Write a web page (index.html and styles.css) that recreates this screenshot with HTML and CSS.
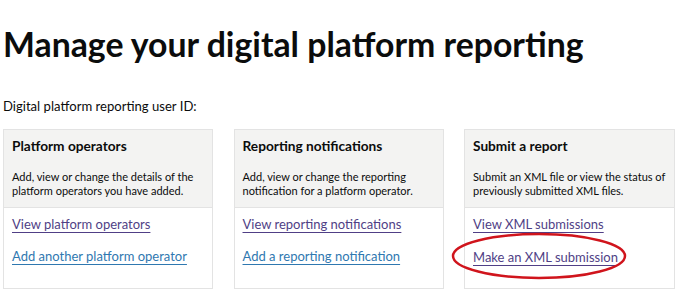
FILE: index.html
```html
<!DOCTYPE html>
<html lang="en">
<head>
    <meta charset="UTF-8">
    <title>Manage your digital platform reporting</title>
    <link rel="stylesheet" href="styles.css">
</head>
<body>

<div class="page">
    <h1 class="title">Manage your digital platform reporting</h1>
    <p class="user-id">Digital platform reporting user ID:</p>

    <div class="cards">
        <div class="card">
            <div class="card-head">
                <h2 class="card-title">Platform operators</h2>
                <p class="card-text">Add, view or change the details of the platform operators you have added.</p>
            </div>
            <div class="card-body">
                <a class="link visited" href="#">View platform operators</a>
                <a class="link" href="#">Add another platform operator</a>
            </div>
        </div>

        <div class="card">
            <div class="card-head">
                <h2 class="card-title">Reporting notifications</h2>
                <p class="card-text">Add, view or change the reporting notification for a platform operator.</p>
            </div>
            <div class="card-body">
                <a class="link visited" href="#">View reporting notifications</a>
                <a class="link" href="#">Add a reporting notification</a>
            </div>
        </div>

        <div class="card">
            <div class="card-head">
                <h2 class="card-title">Submit a report</h2>
                <p class="card-text">Submit an XML file or view the status of previously submitted XML files.</p>
            </div>
            <div class="card-body">
                <a class="link visited" href="#">View XML submissions</a>
                <span class="circled">
                    <a class="link visited" href="#">Make an XML submission</a>
                    <svg class="ring" width="176" height="48" viewBox="0 0 176 48">
                        <ellipse cx="88" cy="24" rx="86" ry="22" fill="none" stroke="#d0141c" stroke-width="2.5"/>
                    </svg>
                </span>
            </div>
        </div>
    </div>
</div>

</body>
</html>
```

FILE: styles.css
```css
html,body{
    margin: 0;
    background: #fff;
}
body{
    font-family: Lato, "Liberation Sans", sans-serif;
    color: #0b0c0c;
}

.page{
    padding: 0 5px 0 3px;
}

.title{
    margin: 0;
    padding-top: 24px;
    font-size: 33.8px;
    line-height: 40px;
    font-weight: 700;
}

.user-id{
    margin: 33px 0 0;
    font-size: 13.1px;
    line-height: 18px;
}

.cards{
    display: grid;
    grid-template-columns: 210px 210px 211px;
    column-gap: 20.5px;
    margin-top: 14px;
}

.card{
    box-sizing: border-box;
    border: 1px solid #e3e3e3;
    height: 160px;
    display: flex;
    flex-direction: column;
}

.card-head{
    box-sizing: border-box;
    background: #f3f3f2;
    border-bottom: 1px solid #e3e3e3;
    padding: 6px 8px 0 8px;
    height: 78px;
}

.card-title{
    margin: 0;
    font-size: 13.7px;
    line-height: 20px;
    font-weight: 700;
}

.card-text{
    margin: 14px 0 0;
    font-size: 11px;
    line-height: 14px;
}

.card-body{
    padding: 6px 8px 0 8px;
    display: flex;
    flex-direction: column;
    align-items: flex-start;
    gap: 12px;
}

.link{
    font-size: 13px;
    line-height: 20px;
    color: #2f78b0;
    text-decoration: underline;
    text-underline-offset: 3px;
    text-decoration-thickness: 1px;
}

.link.visited{
    color: #503f86;
}

.circled{
    position: relative;
    display: inline-block;
}

.ring{
    position: absolute;
    left: -22px;
    top: -14px;
}
```
